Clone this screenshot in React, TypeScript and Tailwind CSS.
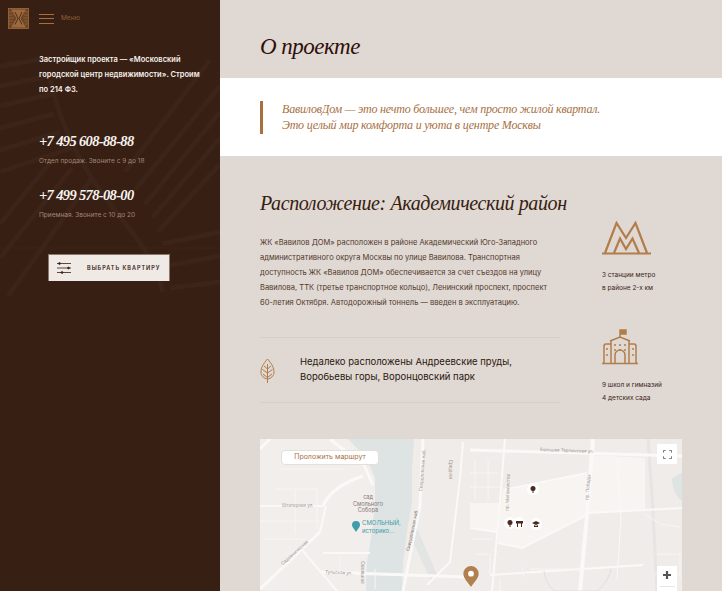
const sans = "font-['Inter','Noto_Sans',sans-serif]";
const serif = "font-['Liberation_Serif',serif] italic";

function Logo() {
  return (
    <svg width="21" height="21" viewBox="0 0 21 21" fill="none" stroke="#a06c3e" strokeWidth="0.8">
      <rect x="0.500" y="0.500" width="20" height="20" fill="#6b4427" />
      <path d="M3 1.500h15l-5.500 9 5.500 9H3l5.500-9z" fill="#9c6a3c" stroke="none" />
      <path d="M7 4l3 6.500-3 6M14 4l-3 6.500 3 6" stroke="#3a2114" strokeWidth="0.800" />
      <path d="M1 4h3M1 7h4M1 10h5M1 13h4M1 16h3M20 4h-3M20 7h-4M20 10h-5M20 13h-4M20 16h-3" stroke="#a06c3e" strokeWidth="0.700" />
    </svg>
  );
}

function SidebarPattern() {
  return (
    <svg className="absolute inset-0" width="220" height="300" viewBox="0 0 220 300" fill="none" stroke="#3d2418" strokeWidth="5">
      <path d="M0 66l50-8M0 86l50-10M0 106l52-12M0 128l54-14M0 150l60-18M0 172l72-24" />
      <path d="M50 80c10 40 24 70 38 92 30 50 62 70 75 120" />
      <path d="M210 60L125 172M220 86L135 190M220 112L145 204M220 138L152 218M220 164L158 232" />
      <path d="M8 296L92 178M0 258L72 168M0 224L52 160" />
      <path d="M162 244l58-12M166 266l54-10M170 288l50-6" />
      <path d="M0 248h220" strokeWidth="1" />
    </svg>
  );
}

function MetroIcon() {
  return (
    <svg width="49" height="34" viewBox="0 0 49 34" fill="none" stroke="#b27d4a" strokeWidth="2.200">
      <path d="M0 32.500h49" />
      <path d="M3 32L14.500 2 24 17l9.500-15L45 32" />
      <path d="M12 32l6-14.500L24 28l6.500-10.500L37 32" />
    </svg>
  );
}

function SchoolIcon() {
  return (
    <svg width="36" height="36" viewBox="0 0 36 36" fill="none" stroke="#b27d4a" strokeWidth="1.500">
      <path d="M18 8V1h6v4h-6z" fill="#b27d4a" />
      <path d="M8 12l10-4 10 4M9 12v22M27 12v22M0 34.500h36M2 34V17q0-2 2-2h5M34 34V17q0-2-2-2h-5" />
      <path d="M13 34V26a5 5 0 0110 0v8" />
      <path d="M5 19v2M5 25v2M31 19v2M31 25v2M13 15v2M18 15v2M23 15v2M13 20v2M18 20v2M23 20v2" />
    </svg>
  );
}

function LeafIcon() {
  return (
    <svg width="15" height="25" viewBox="0 0 15 25" fill="none" stroke="#b27d4a" strokeWidth="1">
      <path d="M7.500 1C3 6 1 10 1 14c0 4 3 6.500 6.500 7 3.500-.5 6.500-3 6.500-7 0-4-2-8-6.500-13z" />
      <path d="M7.500 6v19M7.500 11L4 8M7.500 11L11 8M7.500 15L2.500 11.500M7.500 15l5-3.500M7.500 19.500L3 16M7.500 19.500l4.500-3.500" />
    </svg>
  );
}

function FilterIcon() {
  return (
    <svg width="14" height="12" viewBox="0 0 14 12" fill="#38200f" stroke="#38200f" strokeWidth="0.800">
      <path d="M0 1.500h14M0 6h14M0 10.500h14" />
      <circle cx="2.500" cy="1.500" r="0.900" />
      <circle cx="11.500" cy="6" r="0.900" />
      <circle cx="5" cy="10.500" r="0.900" />
    </svg>
  );
}

function MapDrawing() {
  return (
    <svg className="absolute inset-0" width="422" height="152" viewBox="0 0 422 152" fill="none">
      <rect width="422" height="152" fill="#f0ece9" />
      <path d="M243 51l84-17v42l-65 33-24-5 2-40h-30v25l27 4z" fill="#f7f4f2" />
      <path d="M330 16l55 3v52l-55 3z" fill="#f7f4f2" />
      <path d="M0 0h88l27 39v112H0z" fill="#f2eeeb" />
      <path d="M88 0l19 19 8 20v24l-3 30-5 30-1 29h36l1-29 4-30 5-30V29l2-29z" fill="#dee3e3" />
      <path d="M157 89l20 47-6 5-20-42z" fill="#e2e5e4" />
      <path d="M412 40c4-4 10-6 10-6v28c-6-4-10-14-10-22z" fill="#dee3e3" />
      <path d="M388 0l5 73 4 79" stroke="#e6e5e3" strokeWidth="3" />
      <g stroke="#fbf9f8" strokeWidth="2">
        <path d="M0 10L10 0M63 67c6-14 22-24 40-30" strokeWidth="3" />
        <path d="M70 0l10 8 24 18 9 20" strokeWidth="3" />
        <path d="M0 67h63" />
        <path d="M0 150l60-57" strokeWidth="3" />
        <path d="M63 114h47" />
        <path d="M60 133l147 5" strokeWidth="3" />
        <path d="M42 111l35 41" />
        <path d="M60 93l6-26" />
        <path d="M143 152l17-86 3-66" strokeWidth="3" />
        <path d="M203 3l-3 36-10 84-23 23" />
        <path d="M245 0l-5 63-8 89" strokeWidth="2" />
        <path d="M333 0l-6 76-7 76" strokeWidth="4" />
        <path d="M210 11l212 6" strokeWidth="3" />
        <path d="M327 74l95-5" />
        <path d="M230 136l153-10" />
        <path d="M243 51l84-17M238 104l24 5 65-33M210 89l27 4" />
        <path d="M357 20l4 60-4 60" strokeWidth="1" />
      </g>
      <g stroke="#f7f5f3" strokeWidth="1">
        <path d="M15 50h42v40M35 50v45M0 82h60M5 100h40M30 15h50M20 30h65M215 20v40M228 22v38M210 34h28M210 48h30M212 100h20M215 115h15v20M385 75l15 10 20 3M395 115h25v25M395 135h25M262 128l2 10M240 140v12M270 130h50v12M115 130v20M80 118v14" />
      </g>
      <path d="M295 152c-6-4-10-12-11-20M351 130c-2 10-8 18-14 22M295 152h42" stroke="#dcdfdf" strokeWidth="1" />
    </svg>
  );
}

function Pin({ className, children }: { className: string; children: React.ReactNode }) {
  return (
    <div className={`absolute w-[12px] h-[12px] rounded-full bg-white flex items-center justify-center ${className}`}>
      {children}
    </div>
  );
}

const TreeGlyph = () => (
  <svg width="6" height="7" viewBox="0 0 6 7" fill="#4a2a1c">
    <circle cx="3" cy="2.500" r="2.500" />
    <path d="M2.500 4h1v3h-1z" />
  </svg>
);

export default function App() {
  return (
    <div className={`flex w-[722px] h-[591px] overflow-hidden ${sans}`}>
      <aside className="relative w-[220px] shrink-0 bg-[#381f14] overflow-hidden">
        <SidebarPattern />
        <div className="relative flex flex-col pl-[39px]">
          <div className="flex items-center -ml-[31px] pt-[8px] h-[29px]">
            <Logo />
            <div className="ml-[10px] w-[15px] flex flex-col gap-[3.500px]">
              <div className="h-px bg-[#a8703f]" />
              <div className="h-px bg-[#a8703f]" />
              <div className="h-px bg-[#a8703f]" />
            </div>
            <span className="ml-[7px] text-[6.500px] text-[#8f5f38]">Меню</span>
          </div>
          <p className="mt-[23px] w-[170px] text-[7.500px] leading-[15px] font-semibold text-[#f5f0ec]">
            Застройщик проекта — «Московский
            <br />
            городской центр недвижимости». Строим
            <br />
            по 214 ФЗ.
          </p>
          <div className="mt-[35px] font-['Liberation_Serif',serif] italic font-bold text-[14.500px] tracking-[-0.650px] leading-[18px] text-[#f7f3ef]">
            +7 495 608-88-88
          </div>
          <div className="mt-[4px] text-[6.500px] leading-[14px] text-[#a08877]">Отдел продаж. Звоните с 9 до 18</div>
          <div className="mt-[18px] font-['Liberation_Serif',serif] italic font-bold text-[14.500px] tracking-[-0.650px] leading-[18px] text-[#f7f3ef]">
            +7 499 578-08-00
          </div>
          <div className="mt-[4px] text-[6.500px] leading-[14px] text-[#a08877]">Приемная. Звоните с 10 до 20</div>
          <button className="mt-[32px] ml-[9px] w-[122px] h-[27px] flex items-center pl-[8px] bg-[#efeae6] border-x border-t border-[#8c786a] text-[#38200f]">
            <FilterIcon />
            <span className="ml-[16px] text-[5.500px] font-semibold tracking-[1px]">ВЫБРАТЬ КВАРТИРУ</span>
          </button>
        </div>
      </aside>

      <main className="flex-1 bg-[#dfd8d3] overflow-hidden">
        <header className="h-[78px] flex items-center pl-[40px] pt-[17px]">
          <h1 className={`${serif} text-[23px] tracking-[-0.500px] text-[#2f0f0a]`}>О проекте</h1>
        </header>
        <div className="h-[78px] bg-white flex items-center pl-[40px]">
          <blockquote className={`${serif} h-[33px] border-l-[3px] border-[#a8703f] pl-[19px] text-[12px] tracking-[-0.200px] leading-[16px] text-[#a8703f]`}>
            ВавиловДом — это нечто большее, чем просто жилой квартал.
            <br />
            Это целый мир комфорта и уюта в центре Москвы
          </blockquote>
        </div>
        <section className="pl-[40px] pr-[40px] pt-[33px]">
          <h2 className={`${serif} text-[20px] tracking-[-0.400px] leading-[28px] text-[#38200f]`}>Расположение: Академический район</h2>
          <div className="flex">
            <div className="w-[301px]">
              <p className="mt-[18px] text-[7.500px] leading-[15px] text-[#52382c]">
                ЖК «Вавилов ДОМ» расположен в районе Академический Юго-Западного
                <br />
                административного округа Москвы по улице Вавилова. Транспортная
                <br />
                доступность ЖК «Вавилов ДОМ» обеспечивается за счет съездов на улицу
                <br />
                Вавилова, ТТК (третье транспортное кольцо), Ленинский проспект, проспект
                <br />
                60-летия Октября. Автодорожный тоннель — введен в эксплуатацию.
              </p>
              <div className="mt-[27px] h-[66px] flex items-center border-y border-[#d6cec8]">
                <LeafIcon />
                <p className="ml-[25px] pb-[2px] text-[9.500px] leading-[15px] text-[#2b170d]">
                  Недалеко расположены Андреевские пруды,
                  <br />
                  Воробьевы горы, Воронцовский парк
                </p>
              </div>
            </div>
            <div className="ml-[41px] mt-[4px] text-[6.500px] leading-[12.500px] text-[#3b2318]">
              <MetroIcon />
              <p className="mt-[14px]">3 станции метро<br />в районе 2-х км</p>
              <div className="mt-[35px]"><SchoolIcon /></div>
              <p className="mt-[14px]">9 школ и гимназий<br />4 детских сада</p>
            </div>
          </div>
          <div className="relative mt-[35px] w-[422px] h-[152px] overflow-hidden">
            <MapDrawing />
            <div className="absolute left-[21px] top-[11px] w-[98px] h-[15px] rounded-[4px] bg-white border border-[#e5dfda] flex items-center justify-center text-[7px] text-[#a8703f]">
              Проложить маршрут
            </div>
            <div className="absolute left-[397px] top-[5px] w-[20px] h-[20px] bg-white flex items-center justify-center">
              <svg width="9" height="9" viewBox="0 0 10 10" fill="none" stroke="#666" strokeWidth="1">
                <path d="M0.500 3V.5H3M7 .5h2.500V3M9.500 7v2.500H7M3 9.500H.5V7" />
              </svg>
            </div>
            <div className="absolute left-[397px] top-[127px] w-[20px] h-[25px] bg-white flex flex-col items-center pt-[4px]">
              <svg width="10" height="10" viewBox="0 0 10 10" stroke="#555" strokeWidth="2.200"><path d="M5 1v8M1 5h8" /></svg>
              <div className="mt-[6px] w-[15px] h-px bg-[#e6e6e6]" />
            </div>
            <span className="absolute left-[83px] top-[55px] w-[50px] text-center text-[5.500px] leading-[6.500px] text-[#7f7773]">сад<br />Смольного<br />Собора</span>
            <span className="absolute left-[102px] top-[80px] text-[6px] leading-[8px] text-[#3f9ca8]">СМОЛЬНЫЙ,<br />историко...</span>
            <svg className="absolute left-[92px] top-[82px]" width="8" height="11" viewBox="0 0 8 11" fill="#3f9ca8">
              <path d="M4 0a4 4 0 014 4c0 2.500-2.500 4-4 7C2.500 8 0 6.500 0 4a4 4 0 014-4z" />
            </svg>
            <span className="absolute left-[22px] top-[64px] text-[4.500px] text-[#a09893]">Штатерная ул.</span>
            <span className="absolute left-[65px] top-[131px] text-[4.500px] rotate-[3deg] text-[#a09893]">Тульская ул.</span>
            <span className="absolute left-[18px] top-[111px] text-[4.500px] -rotate-[42deg] text-[#a09893]">Садовническая</span>
            <span className="absolute left-[132px] top-[88px] text-[4.500px] -rotate-[78deg] text-[#7f7773]">Свердловская наб.</span>
            <span className="absolute left-[142px] top-[28px] text-[4.500px] -rotate-[85deg] text-[#a09893]">Свердловская наб.</span>
            <span className="absolute left-[180px] top-[27px] text-[4.500px] rotate-[90deg] text-[#a09893]">Средняя</span>
            <span className="absolute left-[91px] top-[130px] text-[4.500px] rotate-[90deg] text-[#a09893]">Смольная</span>
            <span className="absolute left-[280px] top-[9px] text-[4.500px] rotate-[2deg] text-[#a09893]">Большая Тарлинская ул.</span>
            <span className="absolute left-[230px] top-[50px] text-[4.500px] -rotate-[88deg] text-[#a09893]">пр. Металлистов</span>
            <span className="absolute left-[316px] top-[45px] text-[4.500px] -rotate-[85deg] text-[#a09893]">пр. Победы</span>
            <Pin className="left-[267px] top-[44px]"><TreeGlyph /></Pin>
            <Pin className="left-[253px] top-[78px]">
              <svg width="7" height="7" viewBox="0 0 7 7" fill="#4a2a1c"><path d="M0 1h7v2.500H0zM1 3.500h1V7H1zM5 3.500h1V7H5z" /></svg>
            </Pin>
            <Pin className="left-[244px] top-[78px]"><TreeGlyph /></Pin>
            <Pin className="left-[270px] top-[79px]">
              <svg width="8" height="7" viewBox="0 0 8 7" fill="#4a2a1c"><path d="M4 0l4 2-4 2-4-2zM2 4l2 1 2-1v2H2z" /></svg>
            </Pin>
            <svg className="absolute left-[203px] top-[127px]" width="16" height="21" viewBox="0 0 16 22">
              <path d="M8 0a8 8 0 018 8c0 5-5 9-8 14C5 17 0 13 0 8a8 8 0 018-8z" fill="#b0814f" />
              <circle cx="8" cy="8" r="3" fill="#fff" />
            </svg>
          </div>
        </section>
      </main>
    </div>
  );
}
